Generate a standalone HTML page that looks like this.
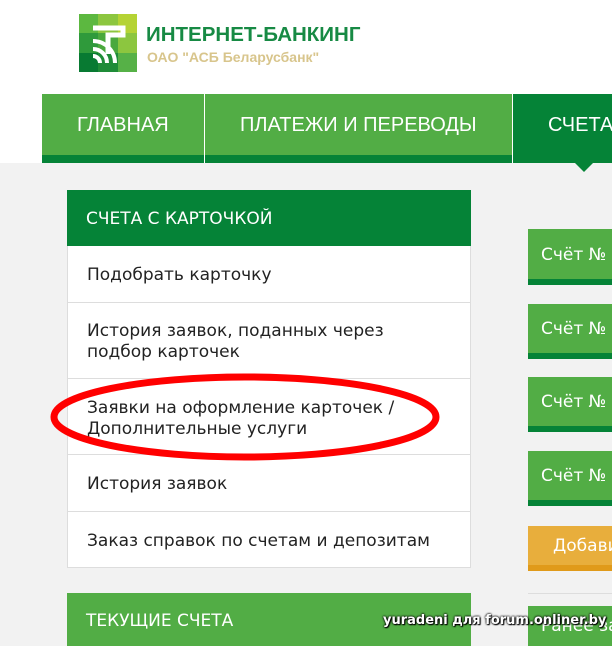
<!DOCTYPE html><html><head><meta charset="utf-8"><style>
*{margin:0;padding:0;box-sizing:border-box}
html,body{width:612px;height:646px;overflow:hidden}
body{background:#f2f2f2;font-family:"DejaVu Sans","Liberation Sans",sans-serif;position:relative}
.hdr{position:absolute;left:0;top:0;width:612px;height:163px;background:#fff}
.abs{position:absolute;white-space:nowrap}
.nav{position:absolute;top:94px;height:69px;background:#52ad45;border-bottom:8px solid #058337;color:#fff;font-family:"Liberation Sans",sans-serif;font-size:20px;line-height:62px;white-space:nowrap;overflow:hidden}
.item{position:absolute;left:67px;width:404px;background:#fff;border:1px solid #ddd;border-top:none;font-size:17px;color:#222;padding-left:19px;white-space:nowrap}
.btn{position:absolute;left:528px;width:84px;background:#52ad45;border-bottom:6px solid #058337;color:#fff;font-size:17px;padding-left:13px;white-space:nowrap;overflow:hidden}
</style></head><body>
<div class="hdr"></div>
<svg class="abs" style="left:79px;top:14px" width="58" height="58" viewBox="0 0 58 58">
<rect width="58" height="58" fill="#3a9e3a"/>
<rect x="0" y="0" width="19" height="19" fill="#5cb840"/><rect x="19" y="0" width="20" height="19" fill="#8cc63f"/><rect x="39" y="0" width="19" height="19" fill="#b5d334"/>
<rect x="0" y="19" width="19" height="20" fill="#2f9a3b"/><rect x="19" y="19" width="20" height="20" fill="#4aa83d"/><rect x="39" y="19" width="19" height="20" fill="#8cc63f"/>
<rect x="0" y="39" width="19" height="19" fill="#087a32"/><rect x="19" y="39" width="20" height="19" fill="#1f8c38"/><rect x="39" y="39" width="19" height="19" fill="#56b147"/>
<path d="M14 14 H44 V21 H29 V40" fill="none" stroke="#fff" stroke-width="5"/>
<path d="M14 27 A22 22 0 0 1 36 49 M14 35 A14 14 0 0 1 28 49 M14 42 A7 7 0 0 1 21 49" fill="none" stroke="#fff" stroke-width="4"/>
</svg>
<div class="abs" style="left:146px;top:23px;font-family:'Liberation Sans',sans-serif;font-weight:bold;font-size:20.5px;color:#178a44">ИНТЕРНЕТ-БАНКИНГ</div>
<div class="abs" style="left:147px;top:49px;font-family:'Liberation Sans',sans-serif;font-weight:bold;font-size:14px;color:#d8c58c">ОАО "АСБ Беларусбанк"</div>
<div class="nav" style="left:42px;width:162px;padding-left:35px">ГЛАВНАЯ</div>
<div class="nav" style="left:205px;width:307px;padding-left:35px">ПЛАТЕЖИ И ПЕРЕВОДЫ</div>
<div class="nav" style="left:513px;width:99px;padding-left:35px;background:#058337">СЧЕТА</div>
<div class="abs" style="left:575px;top:163px;width:0;height:0;border-left:9px solid transparent;border-right:9px solid transparent;border-top:9px solid #058337"></div>
<div class="abs" style="left:67px;top:190px;width:404px;height:56px;background:#058337;color:#fff;font-size:17px;line-height:58px;padding-left:19px">СЧЕТА С КАРТОЧКОЙ</div>
<div class="item" style="top:246px;height:57px;line-height:59px">Подобрать карточку</div>
<div class="item" style="top:303px;height:76px;padding-top:18px;line-height:21px">История заявок, поданных через<br>подбор карточек</div>
<div class="item" style="top:379px;height:76px;padding-top:19px;line-height:21px">Заявки на оформление карточек /<br>Дополнительные услуги</div>
<div class="item" style="top:455px;height:57px;line-height:59px">История заявок</div>
<div class="item" style="top:512px;height:56px;line-height:58px">Заказ справок по счетам и депозитам</div>
<div class="abs" style="left:67px;top:593px;width:404px;height:53px;background:#52ad45;color:#fff;font-size:17px;line-height:57px;padding-left:19px">ТЕКУЩИЕ СЧЕТА</div>
<div class="btn" style="top:229px;height:56px;line-height:52px">Счёт №</div>
<div class="btn" style="top:304px;height:55px;line-height:51px">Счёт №</div>
<div class="btn" style="top:377px;height:55px;line-height:51px">Счёт №</div>
<div class="btn" style="top:451px;height:55px;line-height:51px">Счёт №</div>
<div class="btn" style="top:526px;height:45px;line-height:40px;background:#e8ae3c;border-bottom-color:#e09a1a;padding-left:25px">Добавить</div>
<div class="abs" style="left:528px;top:593px;width:84px;height:1px;background:#ddd"></div>
<div class="btn" style="top:606px;height:40px;line-height:40px;border:none">Ранее за</div>
<svg class="abs" style="left:0;top:0" width="612" height="646"><ellipse cx="245" cy="417" rx="191" ry="40" fill="none" stroke="#f00" stroke-width="7"/></svg>
<div class="abs" style="left:383px;top:613px;font-family:'DejaVu Sans',sans-serif;font-weight:bold;font-size:13px;color:#fff;text-shadow:0 0 2px #000,0 0 2px #000,1px 1px 1px #000">yuradeni для forum.onliner.by</div>
</body></html>
